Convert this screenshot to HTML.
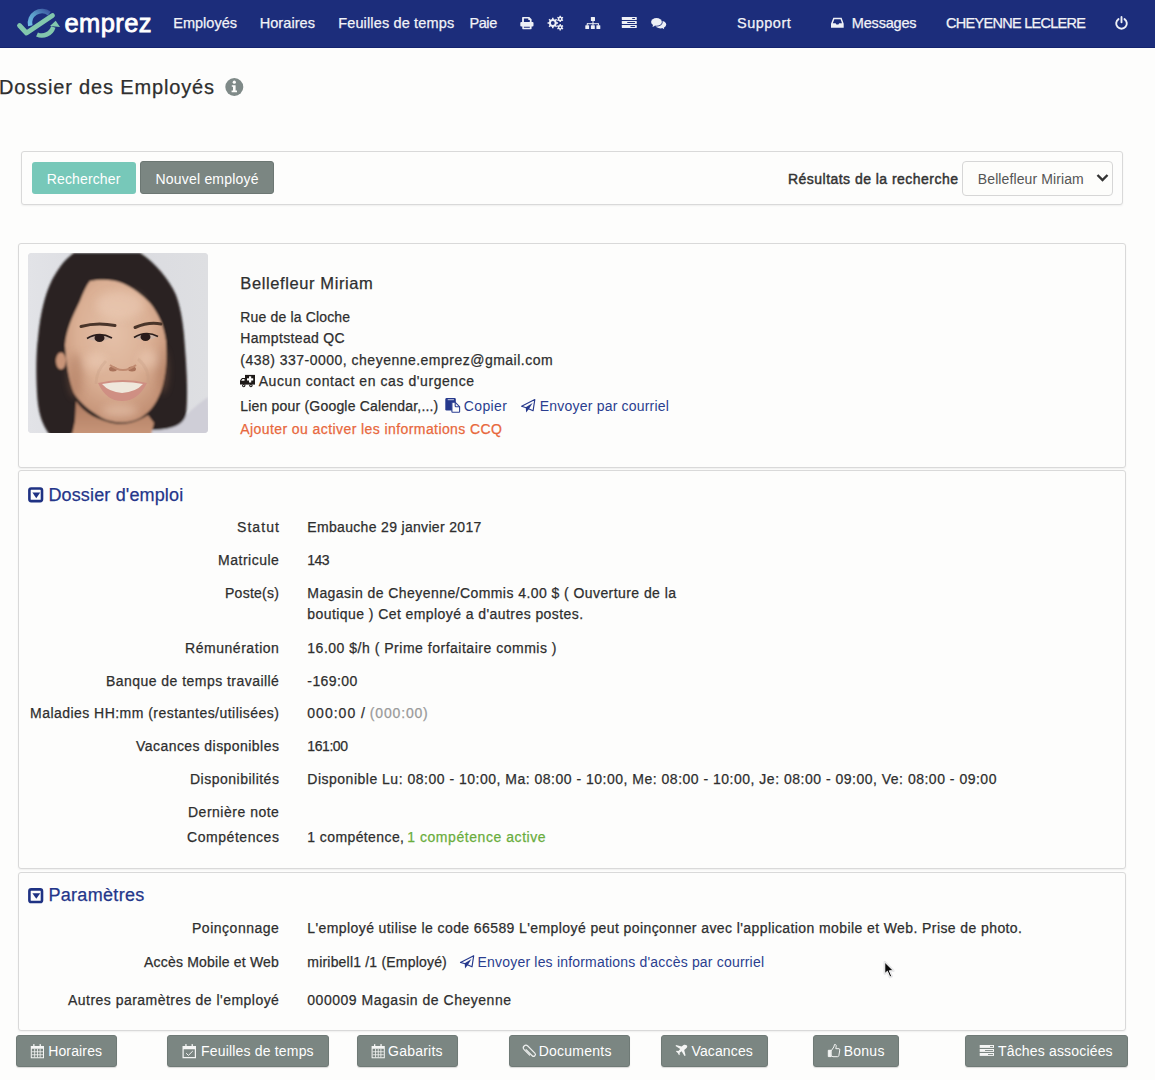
<!DOCTYPE html>
<html><head><meta charset="utf-8">
<style>
html,body{margin:0;padding:0;}
body{width:1155px;height:1080px;overflow:hidden;position:relative;background:#fdfdfc;font-family:"Liberation Sans",sans-serif;}
.t{position:absolute;white-space:nowrap;line-height:1;-webkit-text-stroke:0.25px currentColor;}
.abs{position:absolute;}
.nav{position:absolute;left:0;top:0;width:1155px;height:47px;background:#1c2d7b;border-bottom:1px solid #14246f;}
.panel{position:absolute;border:1px solid #d9d9d9;border-radius:3px;background:#fdfdfc;box-sizing:border-box;box-shadow:0 1px 2px rgba(0,0,0,0.06);}
.btn{position:absolute;border-radius:3px;box-sizing:border-box;}
.gbtn{position:absolute;background:#7b8682;border:1px solid #6f7a76;border-radius:3px;box-sizing:border-box;top:1035px;height:32px;box-shadow:0 1px 1px rgba(0,0,0,0.15);}
.ico{position:absolute;}
</style></head><body>
<div class="nav"></div>
<!-- logo -->
<svg class="abs" style="left:0;top:0" width="160" height="48" viewBox="0 0 160 48">
  <defs><linearGradient id="lg1" x1="0" y1="1" x2="1" y2="0"><stop offset="0" stop-color="#6ebbe6"/><stop offset="0.5" stop-color="#5a9cc8"/><stop offset="1" stop-color="#3b56a0"/></linearGradient></defs>
  <path d="M30.3 25.7 A12 12 0 0 1 49.4 13.6" fill="none" stroke="url(#lg1)" stroke-width="4.6"/>
  <path d="M37 34.5 A12 12 0 0 0 53.3 27" fill="none" stroke="#82c7ad" stroke-width="4.6"/>
  <path d="M50 26 L55.7 20.8 L60 27 Z" fill="#82c7ad"/>
  <path d="M19.5 25.5 L26.5 33 L52.5 15.5" fill="none" stroke="#82c7ad" stroke-width="4.8" stroke-linecap="round" stroke-linejoin="round"/>
  <text x="64.5" y="31.6" font-family="Liberation Sans" font-size="25.5" fill="#fff" stroke="#fff" stroke-width="0.8" letter-spacing="0.4">emprez</text>
</svg>
<!-- nav icons -->
<svg class="abs" style="left:0;top:0" width="1155" height="48" viewBox="0 0 1155 48">
  <g fill="#eef0f6" stroke="none">
   <!-- printer -->
   <path fill-rule="evenodd" d="M522.1 22.6 V17.7 Q522.1 17 522.8 17 H529.3 L531.6 19.3 V22.6 Z M523.9 18.5 V22.6 H529.8 V20.1 H528.6 Q528.3 20.1 528.3 19.8 V18.5 Z"/>
   <rect x="520.3" y="22" width="13.2" height="4.4" rx="1"/>
   <path fill-rule="evenodd" d="M522.3 26 H531.6 V28.6 Q531.6 29.2 531 29.2 H522.9 Q522.3 29.2 522.3 28.6 Z M523.9 26.5 V27.8 H529.8 V26.5 Z"/>
   <!-- gears -->
   <path fill-rule="evenodd" d="M556.72 22.22 L558.04 22.22 L558.04 23.78 L556.72 23.78 L556.13 25.22 L557.06 26.16 L555.96 27.26 L555.02 26.33 L553.58 26.92 L553.58 28.24 L552.02 28.24 L552.02 26.92 L550.58 26.33 L549.64 27.26 L548.54 26.16 L549.47 25.22 L548.88 23.78 L547.56 23.78 L547.56 22.22 L548.88 22.22 L549.47 20.78 L548.54 19.84 L549.64 18.74 L550.58 19.67 L552.02 19.08 L552.02 17.76 L553.58 17.76 L553.58 19.08 L555.02 19.67 L555.96 18.74 L557.06 19.84 L556.13 20.78 Z M554.70 23.00 A1.9 1.9 0 1 0 550.90 23.00 A1.9 1.9 0 1 0 554.70 23.00 Z M562.53 19.46 L563.35 19.90 L562.64 21.12 L561.85 20.64 L560.88 21.20 L560.91 22.12 L559.49 22.12 L559.52 21.20 L558.55 20.64 L557.76 21.12 L557.05 19.90 L557.87 19.46 L557.87 18.34 L557.05 17.90 L557.76 16.68 L558.55 17.16 L559.52 16.60 L559.49 15.68 L560.91 15.68 L560.88 16.60 L561.85 17.16 L562.64 16.68 L563.35 17.90 L562.53 18.34 Z M561.10 18.90 A0.9 0.9 0 1 0 559.30 18.90 A0.9 0.9 0 1 0 561.10 18.90 Z M562.53 27.86 L563.35 28.30 L562.64 29.52 L561.85 29.04 L560.88 29.60 L560.91 30.52 L559.49 30.52 L559.52 29.60 L558.55 29.04 L557.76 29.52 L557.05 28.30 L557.87 27.86 L557.87 26.74 L557.05 26.30 L557.76 25.08 L558.55 25.56 L559.52 25.00 L559.49 24.08 L560.91 24.08 L560.88 25.00 L561.85 25.56 L562.64 25.08 L563.35 26.30 L562.53 26.74 Z M561.10 27.30 A0.9 0.9 0 1 0 559.30 27.30 A0.9 0.9 0 1 0 561.10 27.30 Z"/>
   <!-- sitemap -->
   <rect x="590.9" y="17" width="4.1" height="3.9" rx="0.5"/>
   <rect x="592.5" y="20.5" width="1" height="3.2"/>
   <rect x="587" y="23.2" width="11.7" height="1"/>
   <rect x="586.7" y="23.5" width="1" height="2"/><rect x="592.5" y="23.5" width="1" height="2"/><rect x="597.9" y="23.5" width="1" height="2"/>
   <rect x="585.3" y="25.2" width="3.8" height="3.9" rx="0.5"/><rect x="590.9" y="25.2" width="3.9" height="3.9" rx="0.5"/><rect x="596.4" y="25.2" width="3.9" height="3.9" rx="0.5"/>
   <!-- tasks -->
   <rect x="621.8" y="17" width="15" height="2.9" rx="0.4"/><rect x="621.8" y="21" width="15" height="3" rx="0.4"/><rect x="621.8" y="25" width="15" height="3" rx="0.4"/>
   <!-- comments -->
   <ellipse cx="660.6" cy="24.6" rx="5.6" ry="3.9"/>
   <path d="M661.5 27.5 L664.2 29.2 L663.6 26.6 Z"/>
   <ellipse cx="656.5" cy="21.9" rx="6.2" ry="4.6" fill="#1c2d7b"/>
   <ellipse cx="656.5" cy="21.9" rx="5.4" ry="3.9"/>
   <path d="M653 24.8 L652.6 26.9 L655.6 25.4 Z"/>
   <!-- inbox -->
   <path fill-rule="evenodd" d="M833.3 17.8 H841.6 L843.7 23.7 V27.8 H831 V23.7 Z M834.3 19.2 L832.8 23.2 H835.6 L836.4 24.6 H838.4 L839.2 23.2 H842 L840.6 19.2 Z"/>
  </g>
  <!-- power -->
  <path d="M1118.5 19.1 A5.3 5.3 0 1 0 1124.5 19.1" fill="none" stroke="#eef0f6" stroke-width="1.9" stroke-linecap="round"/>
  <path d="M1121.5 17 V22.3" fill="none" stroke="#eef0f6" stroke-width="1.9" stroke-linecap="round"/>
  <g fill="#1c2d7b"><rect x="632.1" y="18" width="3" height="1" rx="0.5"/><rect x="627.1" y="22" width="8" height="1" rx="0.5"/><rect x="630.4" y="26" width="4.7" height="1" rx="0.5"/></g>
</svg>
<!-- search panel -->
<div class="panel" style="left:21px;top:151px;width:1102px;height:54px;"></div>
<div class="btn" style="left:32px;top:162px;width:104px;height:32px;background:#77c8b9;"></div>
<div class="btn" style="left:140px;top:161px;width:134px;height:33px;background:#7b8682;border:1px solid #6c7773;"></div>
<div class="abs" style="left:962px;top:161px;width:151px;height:35px;border:1px solid #d6d6d6;border-radius:4px;box-sizing:border-box;background:#fdfdfb"></div>
<svg class="abs" style="left:1096px;top:173px" width="13" height="10" viewBox="0 0 13 10"><path d="M1.5 2 L6.5 7 L11.5 2" fill="none" stroke="#333" stroke-width="2.4"/></svg>

<!-- card 1 -->
<div class="panel" style="left:18px;top:243px;width:1108px;height:225px;"></div>
<div class="abs" style="left:28px;top:253px;width:180px;height:180px;border-radius:4px;overflow:hidden;background:#dcdde1">
 <svg width="180" height="180" viewBox="0 0 180 180">
  <defs>
   <radialGradient id="sk" cx="0.48" cy="0.38" r="0.65"><stop offset="0" stop-color="#e4c0a8"/><stop offset="0.55" stop-color="#dbb095"/><stop offset="1" stop-color="#c18e72"/></radialGradient>
   <linearGradient id="bg" x1="0" y1="0" x2="1" y2="0"><stop offset="0" stop-color="#e2e3e7"/><stop offset="0.5" stop-color="#dadbe0"/><stop offset="1" stop-color="#dedfe2"/></linearGradient>
   <linearGradient id="nk" x1="0" y1="0" x2="0" y2="1"><stop offset="0" stop-color="#ad7a60"/><stop offset="1" stop-color="#c89679"/></linearGradient>
   <filter id="bl" x="-10%" y="-10%" width="120%" height="120%"><feGaussianBlur stdDeviation="1.2"/></filter>
   <filter id="bl2" x="-20%" y="-20%" width="140%" height="140%"><feGaussianBlur stdDeviation="0.7"/></filter>
   <filter id="bl3" x="-30%" y="-30%" width="160%" height="160%"><feGaussianBlur stdDeviation="4"/></filter>
  </defs>
  <rect width="180" height="180" fill="url(#bg)"/>
  <g filter="url(#bl)">
   <path d="M180 144 C168 152 158 162 148 172 L124 176 L120 182 L182 182 Z" fill="#cfced7"/>
   <path d="M30 182 L36 172 L46 176 L48 182 Z" fill="#e9e9ee"/>
   <path d="M46 0 H112 C128 10 142 28 148 42 C154 58 156 78 157 95 C159 120 160 145 158 162 C155 172 145 176 126 177 L60 172 L42 182 L22 182 C14 172 10 160 9 140 C8 120 8 100 10 85 C12 60 18 35 28 20 C34 10 40 4 46 0 Z" fill="#2a2321"/>
   <path d="M48 148 C56 160 70 168 90 171 C104 171 114 166 120 162 L126 170 L123 182 L44 182 L47 168 Z" fill="url(#nk)"/>
   <path d="M62 28 C72 26 84 26 94 30 C104 34 114 42 122 50 C130 60 136 72 138 88 C139 105 138 122 133 138 C128 152 120 162 108 167 C98 171 84 170 74 165 C62 158 52 150 46 140 C41 128 38 110 37 92 C38 78 44 64 52 48 C55 40 58 33 62 28 Z" fill="url(#sk)"/>
   <ellipse cx="33" cy="108" rx="5" ry="8.5" fill="#c99579"/>
  </g>
  <g filter="url(#bl3)" opacity="0.45">
   <ellipse cx="48" cy="122" rx="7" ry="22" fill="#a87358"/>
   <ellipse cx="134" cy="118" rx="5" ry="22" fill="#a87358"/>
   <ellipse cx="92" cy="52" rx="24" ry="14" fill="#f0d2bd"/>
   <ellipse cx="68" cy="108" rx="11" ry="9" fill="#f0d2bd"/>
   <ellipse cx="120" cy="106" rx="10" ry="9" fill="#f0d2bd"/>
   <ellipse cx="92" cy="158" rx="18" ry="6" fill="#f0d2bd"/>
  </g>
  <g filter="url(#bl2)">
   <path d="M53 73.5 Q69 69 87 72.5" stroke="#4a3429" stroke-width="3" fill="none" stroke-linecap="round"/>
   <path d="M107 74.5 Q121 68.5 133 71" stroke="#4a3429" stroke-width="3" fill="none" stroke-linecap="round"/>
   <path d="M59 85.5 Q71 78.5 84 85 Q71 91 59 85.5 Z" fill="#cdb3a5"/><ellipse cx="71.5" cy="85" rx="5" ry="4" fill="#2b1f1b"/><path d="M59 85.5 Q71 78 84 85" stroke="#2b1f1b" stroke-width="1.6" fill="none"/>
   <path d="M106 84.5 Q118 77.5 130 83.5 Q118 90 106 84.5 Z" fill="#cdb3a5"/><ellipse cx="117.5" cy="84" rx="5" ry="4" fill="#2b1f1b"/><path d="M106 84.5 Q118 77 130 83.5" stroke="#2b1f1b" stroke-width="1.6" fill="none"/>
   <ellipse cx="85" cy="116" rx="4" ry="2.5" fill="#a9725a"/>
   <ellipse cx="104" cy="116" rx="4" ry="2.5" fill="#a9725a"/>
   <path d="M82 112 Q95 122 108 112" stroke="#c08a70" stroke-width="2" fill="none"/>
   <path d="M78 108 Q68 118 68 131" stroke="#c59a80" stroke-width="3" fill="none" opacity="0.3"/>
   <path d="M110 106 Q122 116 120 131" stroke="#c59a80" stroke-width="3" fill="none" opacity="0.3"/>
   <path d="M70 130 Q95 124 119 130 Q110 148 94 148 Q78 148 70 130 Z" fill="#cf8f83"/>
   <path d="M74 131 Q95 127 115 131 Q108 139 94 140 Q81 139 74 131 Z" fill="#efe7dc"/>
  </g>
 </svg>
</div>

<!-- card 2 -->
<div class="panel" style="left:18px;top:470px;width:1108px;height:399px;"></div>
<!-- card 3 -->
<div class="panel" style="left:18px;top:872px;width:1108px;height:159px;"></div>

<!-- bottom buttons -->
<div class="gbtn" style="left:16px;width:101px"></div>
<div class="gbtn" style="left:167px;width:162px"></div>
<div class="gbtn" style="left:357px;width:101px"></div>
<div class="gbtn" style="left:509px;width:121px"></div>
<div class="gbtn" style="left:661px;width:107px"></div>
<div class="gbtn" style="left:813px;width:86px"></div>
<div class="gbtn" style="left:965px;width:163px"></div>

<!-- body icons -->
<svg class="abs" style="left:0;top:0" width="1155" height="1080" viewBox="0 0 1155 1080">
 <!-- ambulance -->
 <g fill="#1e1a18">
  <rect x="245" y="374.9" width="10" height="9.7"/>
  <path d="M240 384.6 V380.5 L242 378 H245.5 V384.6 Z"/>
  <circle cx="243.7" cy="385.6" r="1.7"/><circle cx="250.9" cy="385.6" r="1.7"/>
 </g>
 <g fill="#fdfdfb">
  <rect x="249" y="376.3" width="2.2" height="6.2"/><rect x="247" y="378.3" width="6.2" height="2.2"/>
  <path d="M241.2 380.7 L242.5 379 H244.5 V380.7 Z"/>
  <circle cx="243.7" cy="385.6" r="0.7"/><circle cx="250.9" cy="385.6" r="0.7"/>
 </g>
 <!-- copy -->
 <rect x="445.3" y="398.1" width="10.5" height="12.5" rx="1.3" fill="#25388c"/>
 <rect x="447.6" y="399.1" width="6.4" height="1.1" rx="0.5" fill="#a9b0d2"/>
 <path d="M451.9 402.3 H455.2 L459.6 406.7 V411.7 A0.6 0.6 0 0 1 459 412.3 H452.5 A0.6 0.6 0 0 1 451.9 411.7 Z" fill="#fdfdfc" stroke="#2c3f92" stroke-width="1.1"/>
 <path d="M455.2 402.3 V405.9 A0.8 0.8 0 0 0 456 406.7 H459.6" fill="none" stroke="#2c3f92" stroke-width="1.1"/>
 <!-- send 1 -->
 <g id="snd">
 <path d="M534.8 399.6 L521.6 406.3 L526.2 407.7 L533.1 410.7 Z" fill="none" stroke="#25388c" stroke-width="1.15" stroke-linejoin="round"/>
 <path d="M525.8 407.2 L532.6 403 L528.9 408.9 L526.1 412.4 Z" fill="#25388c"/>
 </g>
 <!-- send 2 -->
 <use href="#snd" transform="translate(-61.1 556.1)"/>
 <!-- info icon -->
 <circle cx="234.3" cy="87" r="9" fill="#7f8a88"/>
 <circle cx="234.3" cy="82.2" r="1.6" fill="#fdfdfb"/>
 <path d="M231.8 85.2 H235.6 V90.6 H237 V92.2 H231.6 V90.6 H233 V86.8 H231.8 Z" fill="#fdfdfb"/>
 <!-- section icons -->
 <g>
  <rect x="29.4" y="488.5" width="12.6" height="12.6" rx="1.8" fill="none" stroke="#1f3283" stroke-width="2.6"/>
  <path d="M32.4 492.6 H40.2 L36.3 498.2 Z" fill="#1f3283"/>
  <rect x="29.4" y="889.4" width="12.6" height="12.6" rx="1.8" fill="none" stroke="#1f3283" stroke-width="2.6"/>
  <path d="M32.4 893.2 H40.2 L36.3 898.8 Z" fill="#1f3283"/>
 </g>
 <!-- button icons -->
 <g fill="#f4f5f4">
  <!-- calendar Horaires -->
  <path fill-rule="evenodd" d="M30.8 1046 H44 V1058.3 H30.8 Z M31.8 1048.8 V1057.3 H43 V1048.8 Z"/>
  <rect x="33.2" y="1044" width="1.3" height="3" rx="0.6"/><rect x="39.6" y="1044" width="1.3" height="3" rx="0.6"/>
  <g><rect x="31.8" y="1051.4" width="11.2" height="0.8"/><rect x="31.8" y="1054.4" width="11.2" height="0.8"/><rect x="34.3" y="1048.8" width="0.8" height="8.5"/><rect x="37" y="1048.8" width="0.8" height="8.5"/><rect x="39.7" y="1048.8" width="0.8" height="8.5"/></g>
  <!-- calendar Gabarits -->
  <path fill-rule="evenodd" d="M371.6 1046 H384.8 V1058.3 H371.6 Z M372.6 1048.8 V1057.3 H383.8 V1048.8 Z"/>
  <rect x="374" y="1044" width="1.3" height="3" rx="0.6"/><rect x="380.4" y="1044" width="1.3" height="3" rx="0.6"/>
  <g><rect x="372.6" y="1051.4" width="11.2" height="0.8"/><rect x="372.6" y="1054.4" width="11.2" height="0.8"/><rect x="375.1" y="1048.8" width="0.8" height="8.5"/><rect x="377.8" y="1048.8" width="0.8" height="8.5"/><rect x="380.5" y="1048.8" width="0.8" height="8.5"/></g>
  <!-- calendar check -->
  <path fill-rule="evenodd" d="M182.5 1046 H196 V1058.3 H182.5 Z M183.7 1049.2 V1057.1 H194.8 V1049.2 Z"/>
  <rect x="185.3" y="1044" width="1.3" height="3" rx="0.6"/><rect x="191.6" y="1044" width="1.3" height="3" rx="0.6"/>
  <path d="M186.2 1053.2 L188.4 1055.4 L192.8 1051" fill="none" stroke="#f4f5f4" stroke-width="1"/>
  <!-- tasks -->
  <rect x="979.7" y="1045" width="14.3" height="2.9"/><rect x="979.7" y="1049" width="14.3" height="2.9"/><rect x="979.7" y="1053" width="14.3" height="2.9"/>
 </g>
 <g fill="#7b8682"><rect x="990" y="1046" width="3" height="0.9"/><rect x="985" y="1050" width="8" height="0.9"/><rect x="988" y="1054" width="5" height="0.9"/></g>
 <!-- paperclip -->
 <path d="M-2.6 3.2 V-4.6 A2.6 2.6 0 0 1 2.6 -4.6 V5.4 A1.9 1.9 0 0 1 -1.2 5.4 V-3.2" fill="none" stroke="#eef0ef" stroke-width="1.15" stroke-linecap="round" transform="translate(529.2 1051.1) rotate(-45) scale(1.0)"/>
 <!-- plane -->
 <path d="M686.6 1045.2 C687.8 1046 687.2 1047.4 686 1048.4 L684.2 1050 L685.6 1055.6 L684.5 1056 L681.6 1051.2 L679.6 1052.8 L679.8 1054.6 L679 1055.2 L677.8 1053 L676 1051.6 L676.6 1050.8 L678.4 1051 L680.2 1049 L675.6 1046 L676 1045 L681.6 1046.6 L683.6 1045 C684.6 1044.4 685.8 1044.6 686.6 1045.2 Z" fill="#f4f5f4"/>
 <!-- thumbs up -->
 <path d="M828.3 1050.3 H831.2 V1056.6 H828.3 Z M831.2 1050.8 L833.8 1047 L834.5 1044.5 C835.6 1044.2 836.3 1044.8 836.2 1046.2 L835.8 1048.7 H839 C839.6 1048.7 840 1049.3 839.8 1050 L838.8 1055.8 C838.6 1056.4 838.2 1056.7 837.6 1056.7 H833 L831.2 1055.8" fill="none" stroke="#f4f5f4" stroke-width="1"/>
 <rect x="828.3" y="1050.3" width="2.6" height="6.3" fill="#f4f5f4"/>
 <!-- cursor -->
 <path d="M884.8 962.2 L884.8 973.6 L887.4 971.2 L889.9 977 L891.7 976.2 L889.3 970.7 L893.3 970.7 Z" fill="none" stroke="#e6e6e8" stroke-width="2.6" stroke-linejoin="round"/><path d="M884.8 962.2 L884.8 973.6 L887.4 971.2 L889.9 977 L891.7 976.2 L889.3 970.7 L893.3 970.7 Z" fill="#0a0a0a" stroke="#fff" stroke-width="0.9" stroke-linejoin="round"/>
</svg>
<div class="t" style="left:173.2px;top:15.7px;font-size:14.5px;color:#f2f3f7;letter-spacing:0.033px">Employés</div>
<div class="t" style="left:259.7px;top:15.7px;font-size:14.5px;color:#f2f3f7;letter-spacing:0.072px">Horaires</div>
<div class="t" style="left:338.2px;top:15.7px;font-size:14.5px;color:#f2f3f7;letter-spacing:0.147px">Feuilles de temps</div>
<div class="t" style="left:469.4px;top:15.7px;font-size:14.5px;color:#f2f3f7;letter-spacing:-0.377px">Paie</div>
<div class="t" style="left:737.0px;top:15.7px;font-size:14.5px;color:#f2f3f7;letter-spacing:0.501px">Support</div>
<div class="t" style="left:851.8px;top:15.7px;font-size:14.5px;color:#f2f3f7;letter-spacing:-0.185px">Messages</div>
<div class="t" style="left:946.0px;top:15.7px;font-size:14.5px;color:#f2f3f7;letter-spacing:-0.713px">CHEYENNE LECLERE</div>
<div class="t" style="left:-1.0px;top:77.3px;font-size:20px;color:#2e2e2e;letter-spacing:0.844px">Dossier des Employés</div>
<div class="t" style="left:46.8px;top:171.7px;font-size:14px;color:#fff;letter-spacing:0.125px;-webkit-text-stroke:0px currentColor">Rechercher</div>
<div class="t" style="left:155.5px;top:171.7px;font-size:14px;color:#fff;letter-spacing:0.201px;-webkit-text-stroke:0px currentColor">Nouvel employé</div>
<div class="t" style="left:788.0px;top:171.5px;font-size:14px;color:#333;letter-spacing:0.468px;-webkit-text-stroke:0.45px currentColor">Résultats de la recherche</div>
<div class="t" style="left:977.8px;top:171.5px;font-size:14px;color:#555;letter-spacing:0.103px;-webkit-text-stroke:0px currentColor">Bellefleur Miriam</div>
<div class="t" style="left:240.3px;top:275.1px;font-size:16.5px;color:#2e2e2e;letter-spacing:0.602px">Bellefleur Miriam</div>
<div class="t" style="left:240.3px;top:309.9px;font-size:14px;color:#2e2e2e;letter-spacing:0.160px">Rue de la Cloche</div>
<div class="t" style="left:240.3px;top:331.4px;font-size:14px;color:#2e2e2e;letter-spacing:0.335px">Hamptstead QC</div>
<div class="t" style="left:240.3px;top:352.6px;font-size:14px;color:#2e2e2e;letter-spacing:0.487px">(438) 337-0000, cheyenne.emprez@gmail.com</div>
<div class="t" style="left:258.7px;top:373.7px;font-size:14px;color:#2e2e2e;letter-spacing:0.572px">Aucun contact en cas d'urgence</div>
<div class="t" style="left:240.3px;top:398.7px;font-size:14px;color:#2e2e2e;letter-spacing:0.192px">Lien pour (Google Calendar,...)</div>
<div class="t" style="left:463.8px;top:398.7px;font-size:14px;color:#2a3d8f;letter-spacing:0.350px;-webkit-text-stroke:0px currentColor">Copier</div>
<div class="t" style="left:539.8px;top:398.7px;font-size:14px;color:#2a3d8f;letter-spacing:0.201px;-webkit-text-stroke:0px currentColor">Envoyer par courriel</div>
<div class="t" style="left:240.3px;top:422.1px;font-size:14px;color:#e8683d;letter-spacing:0.416px">Ajouter ou activer les informations CCQ</div>
<div class="t" style="left:48.4px;top:485.7px;font-size:18px;color:#24368a;letter-spacing:0.153px">Dossier d'emploi</div>
<div class="t" style="left:48.4px;top:886.2px;font-size:18px;color:#24368a;letter-spacing:0.317px">Paramètres</div>
<div class="t" style="left:237.0px;top:520.4px;font-size:14px;color:#2e2e2e;letter-spacing:1.061px">Statut</div>
<div class="t" style="left:307.3px;top:520.4px;font-size:14px;color:#2e2e2e;letter-spacing:0.323px">Embauche 29 janvier 2017</div>
<div class="t" style="left:218.0px;top:553.1px;font-size:14px;color:#2e2e2e;letter-spacing:0.513px">Matricule</div>
<div class="t" style="left:307.3px;top:553.1px;font-size:14px;color:#2e2e2e;letter-spacing:-0.530px">143</div>
<div class="t" style="left:225.0px;top:585.7px;font-size:14px;color:#2e2e2e;letter-spacing:0.254px">Poste(s)</div>
<div class="t" style="left:307.3px;top:585.7px;font-size:14px;color:#2e2e2e;letter-spacing:0.432px">Magasin de Cheyenne/Commis 4.00 $ ( Ouverture de la</div>
<div class="t" style="left:185.0px;top:640.6px;font-size:14px;color:#2e2e2e;letter-spacing:0.542px">Rémunération</div>
<div class="t" style="left:307.3px;top:640.6px;font-size:14px;color:#2e2e2e;letter-spacing:0.511px">16.00 $/h ( Prime forfaitaire commis )</div>
<div class="t" style="left:106.0px;top:673.6px;font-size:14px;color:#2e2e2e;letter-spacing:0.459px">Banque de temps travaillé</div>
<div class="t" style="left:307.3px;top:673.6px;font-size:14px;color:#2e2e2e;letter-spacing:0.419px">-169:00</div>
<div class="t" style="left:30.0px;top:706.1px;font-size:14px;color:#2e2e2e;letter-spacing:0.465px">Maladies HH:mm (restantes/utilisées)</div>
<div class="t" style="left:307.3px;top:706.1px;font-size:14px;color:#2e2e2e;letter-spacing:1.013px">000:00 /</div>
<div class="t" style="left:136.0px;top:738.6px;font-size:14px;color:#2e2e2e;letter-spacing:0.448px">Vacances disponibles</div>
<div class="t" style="left:307.3px;top:738.6px;font-size:14px;color:#2e2e2e;letter-spacing:-0.426px">161:00</div>
<div class="t" style="left:190.0px;top:771.5px;font-size:14px;color:#2e2e2e;letter-spacing:0.494px">Disponibilités</div>
<div class="t" style="left:307.3px;top:771.5px;font-size:14px;color:#2e2e2e;letter-spacing:0.502px">Disponible Lu: 08:00 - 10:00, Ma: 08:00 - 10:00, Me: 08:00 - 10:00, Je: 08:00 - 09:00, Ve: 08:00 - 09:00</div>
<div class="t" style="left:188.0px;top:804.8px;font-size:14px;color:#2e2e2e;letter-spacing:0.506px">Dernière note</div>
<div class="t" style="left:187.0px;top:829.6px;font-size:14px;color:#2e2e2e;letter-spacing:0.551px">Compétences</div>
<div class="t" style="left:307.3px;top:829.6px;font-size:14px;color:#2e2e2e;letter-spacing:0.405px">1 compétence,</div>
<div class="t" style="left:192.0px;top:920.9px;font-size:14px;color:#2e2e2e;letter-spacing:0.515px">Poinçonnage</div>
<div class="t" style="left:307.3px;top:920.9px;font-size:14px;color:#2e2e2e;letter-spacing:0.406px">L'employé utilise le code 66589 L'employé peut poinçonner avec l'application mobile et Web. Prise de photo.</div>
<div class="t" style="left:144.0px;top:954.8px;font-size:14px;color:#2e2e2e;letter-spacing:0.203px">Accès Mobile et Web</div>
<div class="t" style="left:307.3px;top:954.8px;font-size:14px;color:#2e2e2e;letter-spacing:0.196px">miribell1 /1 (Employé)</div>
<div class="t" style="left:68.0px;top:993.0px;font-size:14px;color:#2e2e2e;letter-spacing:0.472px">Autres paramètres de l'employé</div>
<div class="t" style="left:307.3px;top:993.0px;font-size:14px;color:#2e2e2e;letter-spacing:0.520px">000009 Magasin de Cheyenne</div>
<div class="t" style="left:307.3px;top:606.9px;font-size:14px;color:#2e2e2e;letter-spacing:0.427px">boutique ) Cet employé a d'autres postes.</div>
<div class="t" style="left:369.8px;top:706.1px;font-size:14px;color:#9a9a9a;letter-spacing:0.835px">(000:00)</div>
<div class="t" style="left:407.2px;top:829.6px;font-size:14px;color:#6aad3d;letter-spacing:0.555px">1 compétence active</div>
<div class="t" style="left:477.6px;top:954.8px;font-size:14px;color:#2a3d8f;letter-spacing:0.188px;-webkit-text-stroke:0px currentColor">Envoyer les informations d'accès par courriel</div>
<div class="t" style="left:48.2px;top:1043.9px;font-size:14px;color:#fff;letter-spacing:0.142px;-webkit-text-stroke:0px currentColor">Horaires</div>
<div class="t" style="left:201.0px;top:1043.9px;font-size:14px;color:#fff;letter-spacing:0.180px;-webkit-text-stroke:0px currentColor">Feuilles de temps</div>
<div class="t" style="left:388.0px;top:1043.9px;font-size:14px;color:#fff;letter-spacing:0.240px;-webkit-text-stroke:0px currentColor">Gabarits</div>
<div class="t" style="left:538.7px;top:1043.9px;font-size:14px;color:#fff;letter-spacing:0.248px;-webkit-text-stroke:0px currentColor">Documents</div>
<div class="t" style="left:691.5px;top:1043.9px;font-size:14px;color:#fff;letter-spacing:0.121px;-webkit-text-stroke:0px currentColor">Vacances</div>
<div class="t" style="left:843.7px;top:1043.9px;font-size:14px;color:#fff;letter-spacing:0.249px;-webkit-text-stroke:0px currentColor">Bonus</div>
<div class="t" style="left:998.0px;top:1043.9px;font-size:14px;color:#fff;letter-spacing:0.169px;-webkit-text-stroke:0px currentColor">Tâches associées</div>
</body></html>
